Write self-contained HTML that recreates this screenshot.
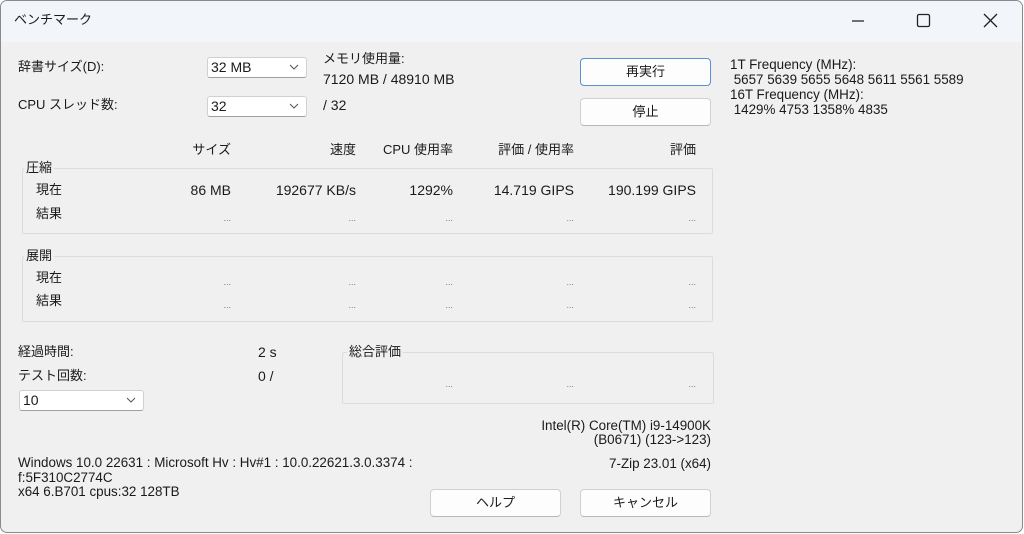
<!DOCTYPE html>
<html><head><meta charset="utf-8"><style>
*{margin:0;padding:0;box-sizing:border-box}
body{width:1024px;height:534px;background:#fff;font-family:"Liberation Sans","Noto Sans CJK JP",sans-serif;font-size:13px;color:#1a1a1a;position:relative;overflow:hidden}
.win{position:absolute;left:0;top:0;width:1023px;height:533px;border:1px solid #8a8a8a;border-radius:7px;background:#f0f0f0;overflow:hidden}
.tb{position:absolute;left:-1px;top:-1px;width:1024px;height:42px;background:#f2f5f9}
.t{position:absolute;white-space:nowrap;line-height:16px}
.l{font-size:14px}
.r{text-align:right}
.combo{position:absolute;background:#fff;border:1px solid #d0d0d0;border-bottom-color:#a0a0a0;border-radius:3px;padding-left:3px;line-height:19px;font-size:14px}
.combo svg{position:absolute;right:7px;top:6px}
.btn{position:absolute;background:#fdfdfd;border:1px solid #d0d0d0;border-bottom-color:#b8b8b8;border-radius:4px;text-align:center;line-height:25px}
.grp{position:absolute;border:1px solid #dcdcdc;border-radius:2px}
.lbl{position:absolute;background:#f0f0f0;padding:0 2px;line-height:16px}
.s{font-size:13.4px}
.dot{font-size:9px;color:#777}
</style></head><body><div class="win">
<div class="tb"></div>
<div class="t" style="left:13px;top:11px">ベンチマーク</div>
<svg style="position:absolute;left:849px;top:11px" width="160" height="20"><line x1="2" y1="9" x2="14" y2="9" stroke="#222" stroke-width="1.2"/><rect x="67.5" y="2.5" width="12" height="12" rx="1.5" fill="none" stroke="#222" stroke-width="1.3"/><path d="M134 2L147 15M147 2L134 15" stroke="#222" stroke-width="1.3"/></svg>

<div class="t" style="left:17px;top:58px">辞書サイズ(D):</div>
<div class="combo" style="left:206px;top:56px;width:100px;height:21px">32 MB<svg width="10" height="6"><path d="M1 1L5 5L9 1" stroke="#555" fill="none"/></svg></div>
<div class="t" style="left:322px;top:50px">メモリ使用量:</div>
<div class="t l" style="left:322px;top:70px">7120 MB / 48910 MB</div>
<div class="t" style="left:17px;top:96px">CPU スレッド数:</div>
<div class="combo" style="left:206px;top:95px;width:100px;height:21px">32<svg width="10" height="6"><path d="M1 1L5 5L9 1" stroke="#555" fill="none"/></svg></div>
<div class="t l" style="left:322px;top:96px">/ 32</div>

<div class="btn" style="left:579px;top:57px;width:131px;height:28px;border:1px solid #5b8fd6;line-height:26px">再実行</div>
<div class="btn" style="left:579px;top:97px;width:131px;height:28px">停止</div>

<div class="t s" style="left:729px;top:56px;line-height:15px">1T Frequency (MHz):<br>&nbsp;5657 5639 5655 5648 5611 5561 5589<br>16T Frequency (MHz):<br>&nbsp;1429% 4753 1358% 4835</div>

<div class="t r" style="right:791px;top:141px">サイズ</div>
<div class="t r" style="right:666px;top:141px">速度</div>
<div class="t r" style="right:569px;top:141px">CPU 使用率</div>
<div class="t r" style="right:448px;top:141px">評価 / 使用率</div>
<div class="t r" style="right:326px;top:141px">評価</div>

<div class="grp" style="left:21px;top:167px;width:691px;height:66px"></div>
<div class="lbl" style="left:23px;top:159px">圧縮</div>
<div class="t" style="left:35px;top:181px">現在</div>
<div class="t" style="left:35px;top:205px">結果</div>
<div class="t r l" style="right:791px;top:181px">86 MB</div>
<div class="t r l" style="right:666px;top:181px">192677 KB/s</div>
<div class="t r l" style="right:569px;top:181px">1292%</div>
<div class="t r l" style="right:448px;top:181px">14.719 GIPS</div>
<div class="t r l" style="right:326px;top:181px">190.199 GIPS</div>
<div class="t r dot" style="right:791px;top:209px">...</div><div class="t r dot" style="right:666px;top:209px">...</div><div class="t r dot" style="right:569px;top:209px">...</div><div class="t r dot" style="right:448px;top:209px">...</div><div class="t r dot" style="right:326px;top:209px">...</div>

<div class="grp" style="left:21px;top:255px;width:691px;height:66px"></div>
<div class="lbl" style="left:23px;top:247px">展開</div>
<div class="t" style="left:35px;top:269px">現在</div>
<div class="t" style="left:35px;top:292px">結果</div>
<div class="t r dot" style="right:791px;top:273px">...</div><div class="t r dot" style="right:666px;top:273px">...</div><div class="t r dot" style="right:569px;top:273px">...</div><div class="t r dot" style="right:448px;top:273px">...</div><div class="t r dot" style="right:326px;top:273px">...</div>
<div class="t r dot" style="right:791px;top:296px">...</div><div class="t r dot" style="right:666px;top:296px">...</div><div class="t r dot" style="right:569px;top:296px">...</div><div class="t r dot" style="right:448px;top:296px">...</div><div class="t r dot" style="right:326px;top:296px">...</div>

<div class="t" style="left:17px;top:343px">経過時間:</div>
<div class="t l" style="left:257px;top:343px">2 s</div>
<div class="t" style="left:17px;top:367px">テスト回数:</div>
<div class="t l" style="left:257px;top:367px">0 /</div>
<div class="combo" style="left:18px;top:389px;width:125px;height:21px">10<svg width="10" height="6"><path d="M1 1L5 5L9 1" stroke="#555" fill="none"/></svg></div>

<div class="grp" style="left:341px;top:351px;width:372px;height:52px"></div>
<div class="lbl" style="left:346px;top:343px">総合評価</div>
<div class="t r dot" style="right:569px;top:375px">...</div><div class="t r dot" style="right:448px;top:375px">...</div><div class="t r dot" style="right:326px;top:375px">...</div>

<div class="t r s" style="right:311px;top:417px">Intel(R) Core(TM) i9-14900K</div>
<div class="t r s" style="right:311px;top:431px">(B0671) (123-&gt;123)</div>
<div class="t r s" style="right:311px;top:455px">7-Zip 23.01 (x64)</div>
<div class="t s" style="left:17px;top:455px;line-height:14.5px">Windows 10.0 22631 : Microsoft Hv : Hv#1 : 10.0.22621.3.0.3374 :<br>f:5F310C2774C<br>x64 6.B701 cpus:32 128TB</div>

<div class="btn" style="left:429px;top:488px;width:131px;height:28px">ヘルプ</div>
<div class="btn" style="left:579px;top:488px;width:131px;height:28px">キャンセル</div>
</div></body></html>
